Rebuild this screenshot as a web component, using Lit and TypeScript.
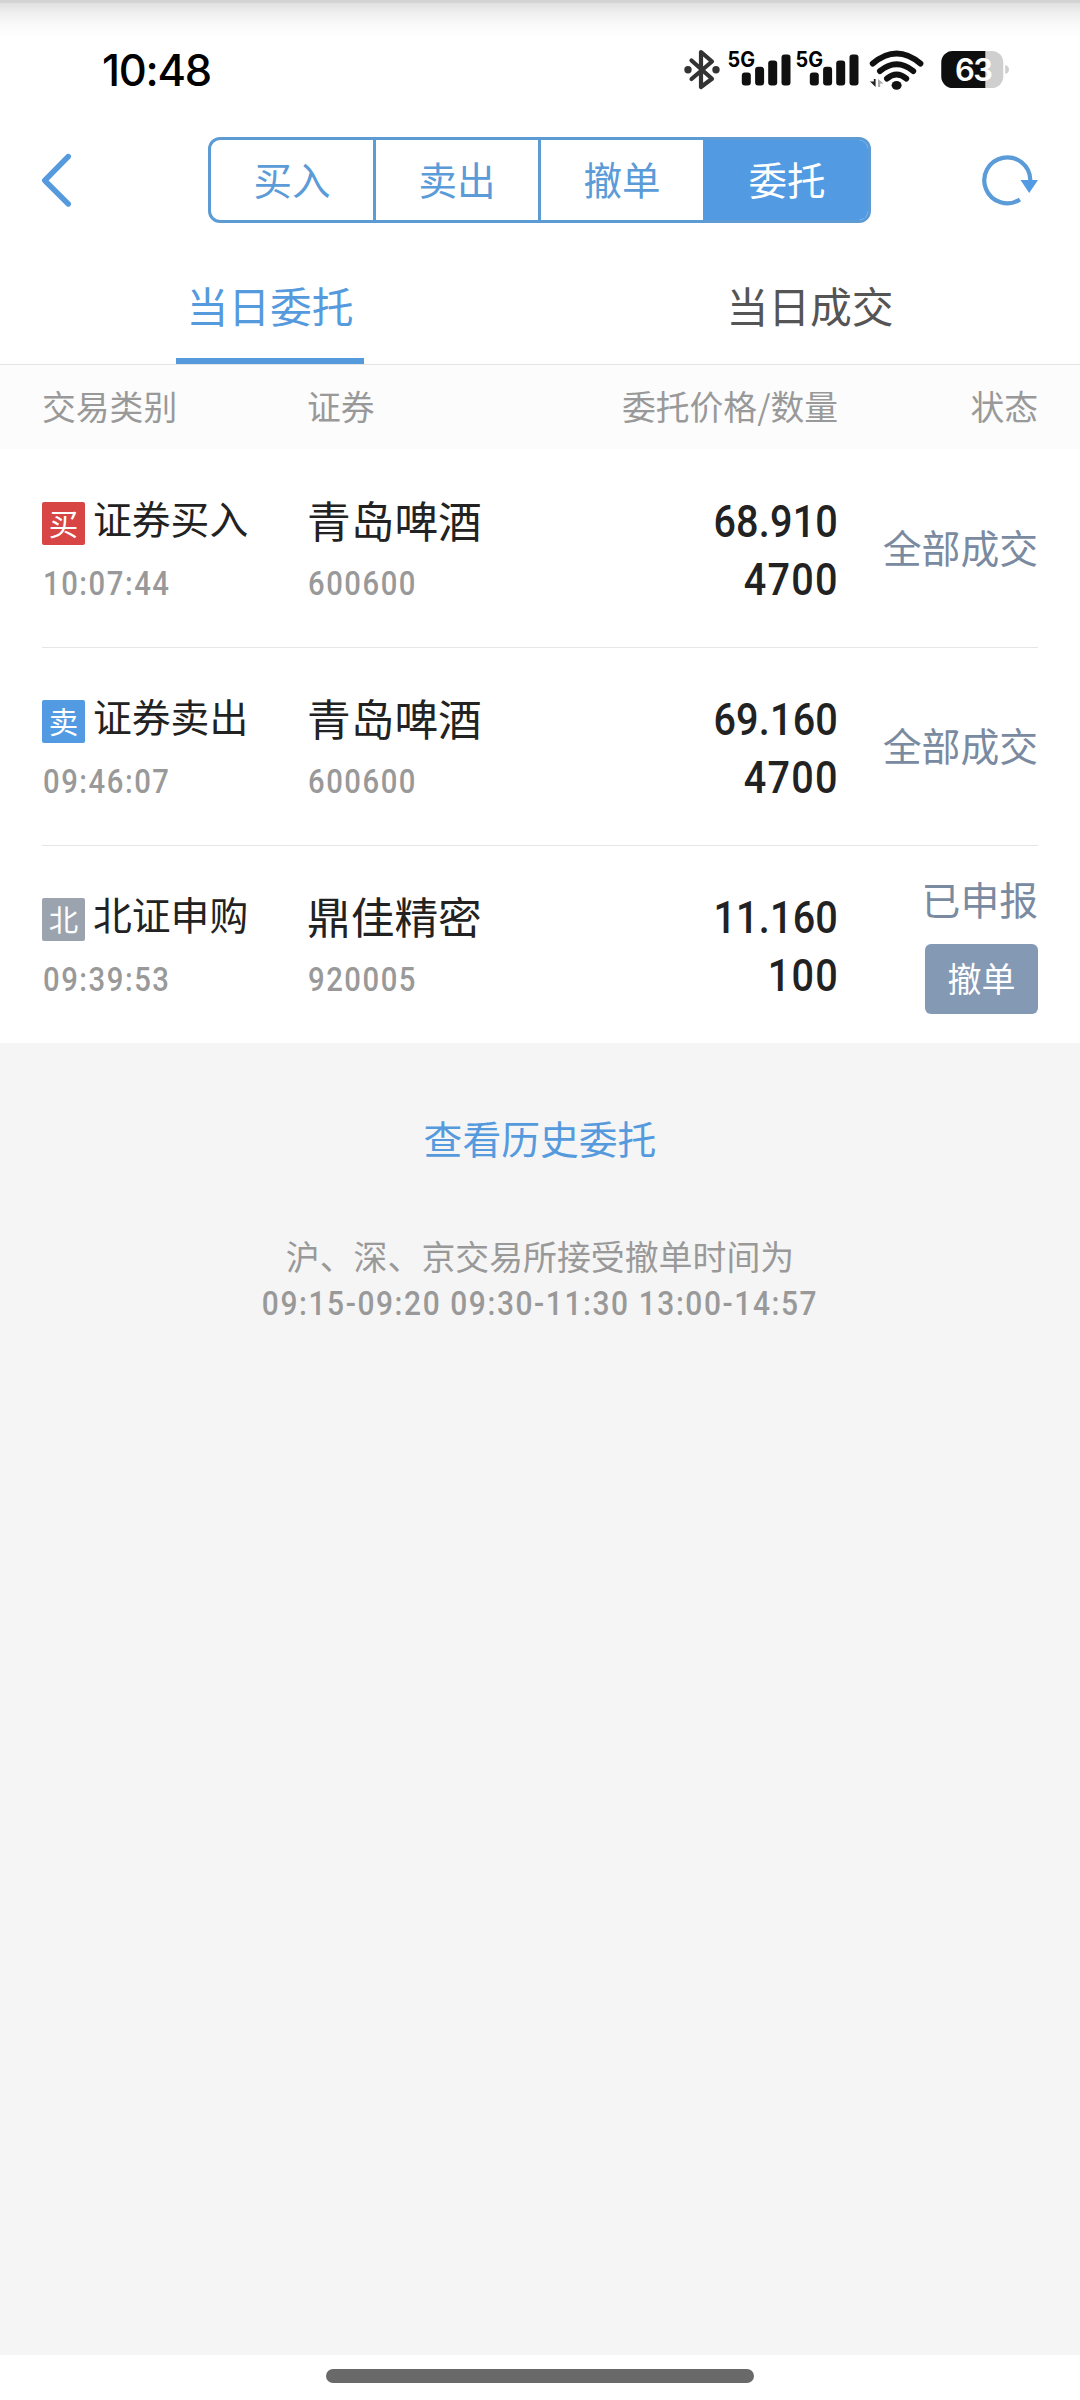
import { LitElement, html, css, svg, nothing } from "lit";
import { customElement, property } from "lit/decorators.js";
import { classMap } from "lit/directives/class-map.js";

interface Order {
  mark: string;
  tone: "buy" | "sell" | "other";
  kind: string;
  time: string;
  name: string;
  code: string;
  price: string;
  amount: string;
  status: string;
  cancellable?: boolean;
}

const ORDERS: Order[] = [
  { mark: "买", tone: "buy", kind: "证券买入", time: "10:07:44", name: "青岛啤酒", code: "600600", price: "68.910", amount: "4700", status: "全部成交" },
  { mark: "卖", tone: "sell", kind: "证券卖出", time: "09:46:07", name: "青岛啤酒", code: "600600", price: "69.160", amount: "4700", status: "全部成交" },
  { mark: "北", tone: "other", kind: "北证申购", time: "09:39:53", name: "鼎佳精密", code: "920005", price: "11.160", amount: "100", status: "已申报", cancellable: true },
];

@customElement("status-bar")
export class StatusBar extends LitElement {
  static styles = css`
    :host {
      display: flex;
      justify-content: space-between;
      height: 137px;
      background: linear-gradient(#d4d4d4 0 3px, #e0e0e0 3px, #efefef 13px, #fafafa 25px, #fff 38px);
    }
    .clock {
      margin: 43px 0 0 102px;
      font: 500 43.5px/54px Inter, sans-serif;
      letter-spacing: -1.3px;
      color: #000;
      height: 54px;
    }
    .icons {
      display: block;
      width: 380px;
      height: 80px;
      margin: 30px 40px 0 0;
    }
    .net {
      font: 700 21px Inter, sans-serif;
      fill: #000;
    }
    .level {
      font: 600 31px Inter, sans-serif;
      fill: #fff;
      letter-spacing: -1.5px;
    }
  `;

  private signal(x: number) {
    return svg`
      <text class="net" x=${x} y="37" textLength="27.5" lengthAdjust="spacingAndGlyphs">5G</text>
      <g fill="#101010">
        <rect x=${x + 14.3} y="42.5" width="9" height="13" rx="3"/>
        <rect x=${x + 27.6} y="36.8" width="9" height="18.7" rx="3"/>
        <rect x=${x + 40.7} y="30.5" width="9" height="25" rx="3"/>
        <rect x=${x + 54} y="24.5" width="9" height="31" rx="3"/>
      </g>`;
  }

  render() {
    return html`
      <div class="clock">10:48</div>
      <svg class="icons" viewBox="0 0 380 80">
        <path d="M31.5 30.5 L52 48.8 L41 57 V22 L52 31.5 L31.5 49" fill="none" stroke="#333" stroke-width="4.2" stroke-linecap="round" stroke-linejoin="round"/>
        <circle cx="28" cy="39.8" r="3.7" fill="#333"/>
        <circle cx="56" cy="39.8" r="3.7" fill="#333"/>
        ${this.signal(67.5)} ${this.signal(135.5)}
        <g fill="none" stroke="#101010" stroke-width="6" stroke-linecap="round">
          <path d="M212.8 33.5 Q236.6 13.5 260.4 33.5"/>
          <path d="M220 41 Q236.6 27.5 253.2 41"/>
          <path d="M227 48.5 Q236.6 40.5 246.2 48.5"/>
        </g>
        <ellipse cx="236.6" cy="55.3" rx="5" ry="4.4" fill="#101010"/>
        <path d="M215.6 49 V57 L210 51.6 H213.8 V49 Z" fill="#222"/>
        <path d="M218 57 V49 L223.6 53.6 H220.2 V57 Z" fill="#aaa"/>
        <rect x="281.3" y="21" width="62" height="37" rx="11.5" fill="#cfcfcf"/>
        <path d="M292.8 21 H325.3 V58 H292.8 A11.5 11.5 0 0 1 281.3 46.5 V32.5 A11.5 11.5 0 0 1 292.8 21 Z" fill="#0e0e0e"/>
        <path d="M345.2 35 Q349 36 349 39.5 Q349 43 345.2 44 Z" fill="#cfcfcf"/>
        <text class="level" x="295" y="51">63</text>
      </svg>
    `;
  }
}

@customElement("nav-bar")
export class NavBar extends LitElement {
  static styles = css`
    :host {
      display: flex;
      align-items: center;
      justify-content: space-between;
      height: 86px;
      padding: 0 36px;
    }
    .icon {
      display: block;
      width: 64px;
      height: 64px;
      margin-top: 2px;
    }
    .segments {
      display: flex;
      box-sizing: border-box;
      width: 663px;
      height: 86px;
      margin-right: 1px;
      border: 3px solid #5d9bd5;
      border-radius: 12px;
      overflow: hidden;
      background: #fff;
    }
    .segment {
      flex: 1 1 0;
      font: 400 38.5px/77px "Noto Sans CJK SC", sans-serif;
      text-align: center;
      color: #5a9bd8;
    }
    .segment + .segment {
      border-left: 3px solid #5d9bd5;
    }
    .segment.active {
      background: #529be2;
      border-color: #529be2;
      color: #fff;
    }
  `;

  render() {
    const items = ["买入", "卖出", "撤单", "委托"];
    return html`
      <svg class="icon" viewBox="0 0 64 64">
        <path d="M32.3 7.5 L8.7 31.5 L32.3 55" fill="none" stroke="#569ade" stroke-width="5.4" stroke-linecap="round" stroke-linejoin="round"/>
      </svg>
      <div class="segments">
        ${items.map((t) => html`<div class=${classMap({ segment: true, active: t === "委托" })}>${t}</div>`)}
      </div>
      <svg class="icon" viewBox="0 0 64 64">
        <path d="M39.9 50.6 A23 23 0 1 1 50.3 31" fill="none" stroke="#5a9bd8" stroke-width="4.2"/>
        <path d="M40.5 31 H58 L49.2 44 Z" fill="#529be2"/>
      </svg>
    `;
  }
}

@customElement("order-row")
export class OrderRow extends LitElement {
  @property({ attribute: false }) order!: Order;

  static styles = css`
    :host {
      display: grid;
      grid-template-columns: 265px 251px 280px 200px;
      box-sizing: border-box;
      height: 198px;
      margin: 0 42px;
      border-top: 1px solid #e6e6e6;
      font-family: "Noto Sans CJK SC", sans-serif;
      color: #222;
    }
    :host(:first-of-type) {
      border-top-color: transparent;
    }
    .cell {
      display: flex;
      flex-direction: column;
      padding-top: 40px;
    }
    .title {
      display: flex;
      align-items: flex-start;
      gap: 8px;
      height: 56px;
      font-size: 38.8px;
      line-height: 55px;
      white-space: nowrap;
    }
    .mark {
      width: 43px;
      height: 43px;
      margin-top: 12px;
      border-radius: 2px;
      font-size: 29.5px;
      line-height: 40px;
      text-align: center;
      color: #fff;
    }
    .buy { background: #d84545; }
    .sell { background: #529be2; }
    .other { background: #9aa3ae; }
    .name {
      height: 56px;
      font-size: 43.7px;
      line-height: 58px;
    }
    .sub {
      width: max-content;
      margin: 17px 0 0 1px;
      font: 500 34px/40px Roboto, sans-serif;
      color: #999;
      letter-spacing: 1.8px;
      transform: scaleX(0.86);
      transform-origin: left;
    }
    .numbers {
      align-items: flex-end;
      padding-top: 43px;
      font: 500 44.5px/58px Roboto, sans-serif;
    }
    .number {
      transform: scaleX(0.89);
      transform-origin: right;
      letter-spacing: 0.2px;
    }
    .amount {
      letter-spacing: 1.4px;
      margin-right: -1px;
    }
    .state {
      align-items: flex-end;
      justify-content: center;
      gap: 22px;
      padding: 0 0 5px;
      font-size: 38.8px;
      line-height: 47px;
      color: #7a8aa1;
    }
    .state.pair {
      padding: 0;
    }
    .cancel {
      width: 113px;
      height: 70px;
      border-radius: 6px;
      background: #8499b4;
      color: #fff;
      font: 400 34px/67px "Noto Sans CJK SC", sans-serif;
      text-align: center;
    }
  `;

  render() {
    const o = this.order;
    return html`
      <div class="cell">
        <div class="title">
          <span class=${classMap({ mark: true, [o.tone]: true })}>${o.mark}</span>
          <span>${o.kind}</span>
        </div>
        <div class="sub">${o.time}</div>
      </div>
      <div class="cell">
        <div class="name">${o.name}</div>
        <div class="sub">${o.code}</div>
      </div>
      <div class="cell numbers">
        <div class="number">${o.price}</div>
        <div class="number amount">${o.amount}</div>
      </div>
      <div class=${classMap({ cell: true, state: true, pair: !!o.cancellable })}>
        <div>${o.status}</div>
        ${o.cancellable ? html`<div class="cancel">撤单</div>` : nothing}
      </div>
    `;
  }
}

@customElement("app-root")
export class AppRoot extends LitElement {
  static styles = css`
    :host {
      display: flex;
      flex-direction: column;
      width: 1080px;
      height: 2400px;
      overflow: hidden;
      background: #fff;
      font-family: "Noto Sans CJK SC", sans-serif;
    }
    .tabs {
      display: flex;
      height: 141px;
      border-bottom: 1px solid #e5e5e5;
    }
    .tab {
      display: flex;
      flex: 1;
      flex-direction: column;
      align-items: center;
      justify-content: space-between;
      padding-top: 52px;
      font-size: 41.8px;
      line-height: 60px;
      color: #555;
    }
    .tab.active {
      color: #569ade;
    }
    .bar {
      width: 188px;
      height: 6px;
      background: #569ade;
    }
    .head {
      display: grid;
      grid-template-columns: 265px 251px 280px 200px;
      height: 84px;
      padding: 0 42px;
      background: #fcfcfc;
      font-size: 33.8px;
      line-height: 81px;
      color: #999;
    }
    .right {
      text-align: right;
    }
    .foot {
      flex: 1;
      background: #f5f5f5;
      text-align: center;
      color: #999;
    }
    .history {
      margin-top: 64px;
      font-size: 38.8px;
      line-height: 60px;
      color: #569ade;
    }
    .notice {
      margin-top: 66px;
      font-size: 33.9px;
      line-height: 46px;
    }
    .hours {
      font: 500 34px/46px Roboto, sans-serif;
      letter-spacing: 1.8px;
      transform: scaleX(0.88);
      margin-top: 1px;
    }
    .home {
      display: flex;
      justify-content: center;
      height: 45px;
      background: #fff;
    }
    .pill {
      width: 428px;
      height: 14px;
      margin-top: 14px;
      border-radius: 7px;
      background: #696969;
    }
  `;

  render() {
    return html`
      <status-bar></status-bar>
      <nav-bar></nav-bar>
      <div class="tabs">
        <div class="tab active"><span>当日委托</span><div class="bar"></div></div>
        <div class="tab"><span>当日成交</span></div>
      </div>
      <div class="head">
        <span>交易类别</span><span>证券</span>
        <span class="right">委托价格/数量</span><span class="right">状态</span>
      </div>
      ${ORDERS.map((o) => html`<order-row .order=${o}></order-row>`)}
      <div class="foot">
        <div class="history">查看历史委托</div>
        <div class="notice">沪、深、京交易所接受撤单时间为</div>
        <div class="hours">09:15-09:20 09:30-11:30 13:00-14:57</div>
      </div>
      <div class="home"><div class="pill"></div></div>
    `;
  }
}
